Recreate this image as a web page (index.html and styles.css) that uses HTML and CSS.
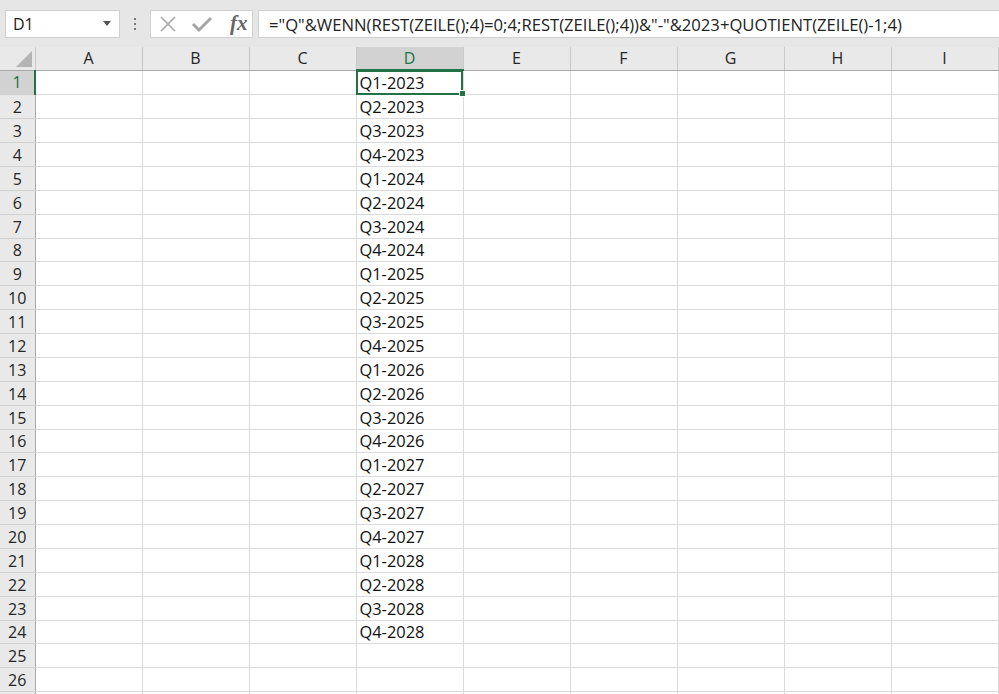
FILE: index.html
```html
<!DOCTYPE html>
<html lang="de">

<head>
    <meta charset="UTF-8">
    <title>Mappe1 - Excel</title>
    <link rel="stylesheet" href="styles.css">
</head>

<body>
    <div class="formula-bar">
        <div class="name-box">
            <span>D1</span>
            <svg class="caret" width="8" height="5" viewBox="0 0 8 5"><path d="M0 0h8L4 5z" fill="#555"/></svg>
        </div>
        <div class="grip">
            <svg width="3" height="12" viewBox="0 0 3 12"><rect x="0" y="0" width="2" height="2" fill="#777"/><rect x="0" y="5" width="2" height="2" fill="#777"/><rect x="0" y="10" width="2" height="2" fill="#777"/></svg>
        </div>
        <div class="fx-box">
            <svg class="btn-icon" width="18" height="18" viewBox="0 0 18 18"><path d="M2 2L16 16M16 2L2 16" stroke="#a6a6a6" stroke-width="1.6" fill="none"/></svg>
            <svg class="btn-icon" width="22" height="18" viewBox="0 0 22 18"><path d="M2 9L8 15L20 3" stroke="#a6a6a6" stroke-width="3" fill="none"/></svg>
            <span class="fx">fx</span>
        </div>
        <div class="formula">="Q"&amp;WENN(REST(ZEILE();4)=0;4;REST(ZEILE();4))&amp;"-"&amp;2023+QUOTIENT(ZEILE()-1;4)</div>
    </div>

    <table class="sheet">
        <colgroup>
            <col class="row-head-col">
            <col span="9" class="data-col">
        </colgroup>
        <thead>
            <tr>
                <th class="corner"><span class="triangle"></span></th>
                <th>A</th>
                <th>B</th>
                <th>C</th>
                <th class="active">D</th>
                <th>E</th>
                <th>F</th>
                <th>G</th>
                <th>H</th>
                <th>I</th>
            </tr>
        </thead>
        <tbody id="rows"></tbody>
    </table>

    <script>
        // Build the rows, column D holds the quarter labels for rows 1-24.
        // The last row only peeks in at the bottom edge, so it gets no number.
        const body = document.getElementById('rows');
        for (let r = 1; r <= 27; r++) {
            const tr = document.createElement('tr');
            const head = document.createElement('th');
            if (r <= 26) head.textContent = r;
            if (r === 1) head.className = 'active';
            tr.appendChild(head);
            for (let c = 0; c < 9; c++) {
                const td = document.createElement('td');
                if (c === 3 && r <= 24) {
                    const q = r % 4 === 0 ? 4 : r % 4;
                    td.textContent = 'Q' + q + '-' + (2023 + Math.floor((r - 1) / 4));
                }
                if (c === 3 && r === 1) {
                    td.className = 'selected';
                    const handle = document.createElement('span');
                    handle.className = 'fill-handle';
                    td.appendChild(handle);
                }
                tr.appendChild(td);
            }
            body.appendChild(tr);
        }
    </script>
</body>

</html>
```

FILE: styles.css
```css
body {
    margin: 0;
    background-color: #e6e6e6;
    font-family: "Open Sans", "Liberation Sans", sans-serif;
    overflow: hidden;
}

.formula-bar {
    display: flex;
    align-items: center;
    height: 47px;
    padding: 0 0 0 5px;
    box-sizing: border-box;
}

.name-box {
    display: flex;
    align-items: center;
    justify-content: space-between;
    width: 115px;
    height: 28px;
    padding: 0 8px 0 7px;
    box-sizing: border-box;
    background-color: #fff;
    border: 1px solid #d0d0d0;
    font-size: 16px;
    color: #222;
}

.grip {
    display: flex;
    align-items: center;
    justify-content: center;
    width: 30px;
}

.fx-box {
    display: flex;
    align-items: center;
    width: 103px;
    height: 28px;
    padding: 0 0 0 8px;
    box-sizing: border-box;
    background-color: #fff;
    border: 1px solid #d0d0d0;
}

.btn-icon {
    margin-right: 14px;
}

.fx {
    margin-left: 3px;
    font-family: "Liberation Serif", serif;
    font-style: italic;
    font-weight: bold;
    font-size: 21px;
    color: #666;
}

.formula {
    flex: 1;
    height: 28px;
    margin-left: 5px;
    padding-left: 10px;
    line-height: 27px;
    box-sizing: border-box;
    background-color: #fff;
    border: 1px solid #d0d0d0;
    border-right: none;
    font-size: 16.65px;
    color: #222;
    white-space: nowrap;
}

.sheet {
    border-collapse: collapse;
    table-layout: fixed;
    width: 998px;
    background-color: #fff;
}

.row-head-col {
    width: 35px;
}

.data-col {
    width: 107px;
}

.sheet th {
    background-color: #e9e9e9;
    font-weight: normal;
    font-size: 16px;
    line-height: 20px;
    color: #262626;
    padding: 0;
}

.sheet thead th {
    height: 22px;
    border-right: 1px solid #c8c8c8;
    border-bottom: 1px solid #a9a9a9;
}

.sheet tbody th {
    height: 23px;
    text-align: center;
    border-right: 1px solid #a9a9a9;
    border-bottom: 1px solid #d0d0d0;
}

.sheet th.active {
    background-color: #d2d2d2;
    color: #217346;
}

.sheet thead th.active {
    border-bottom: 2px solid #217346;
}

.sheet tbody th.active {
    border-right: 2px solid #217346;
}

.corner {
    position: relative;
}

.triangle {
    position: absolute;
    right: 3px;
    bottom: 3px;
    width: 0;
    height: 0;
    border-left: 16px solid transparent;
    border-bottom: 16px solid #b4b4b4;
}

.sheet td {
    height: 23px;
    padding: 0 0 0 3px;
    border-right: 1px solid #dadada;
    border-bottom: 1px solid #dadada;
    font-size: 16.4px;
    line-height: 20px;
    color: #111;
    white-space: nowrap;
}

/* rows are 23.87px in the original, so every eighth row is one pixel shorter */
.sheet tbody tr:nth-child(8n) th,
.sheet tbody tr:nth-child(8n) td {
    height: 22px;
}

.sheet td.selected {
    position: relative;
    outline: 2px solid #217346;
    outline-offset: -2px;
}

.fill-handle {
    position: absolute;
    right: -3px;
    bottom: -3px;
    width: 5px;
    height: 5px;
    background-color: #217346;
    border: 1px solid #fff;
}
```
